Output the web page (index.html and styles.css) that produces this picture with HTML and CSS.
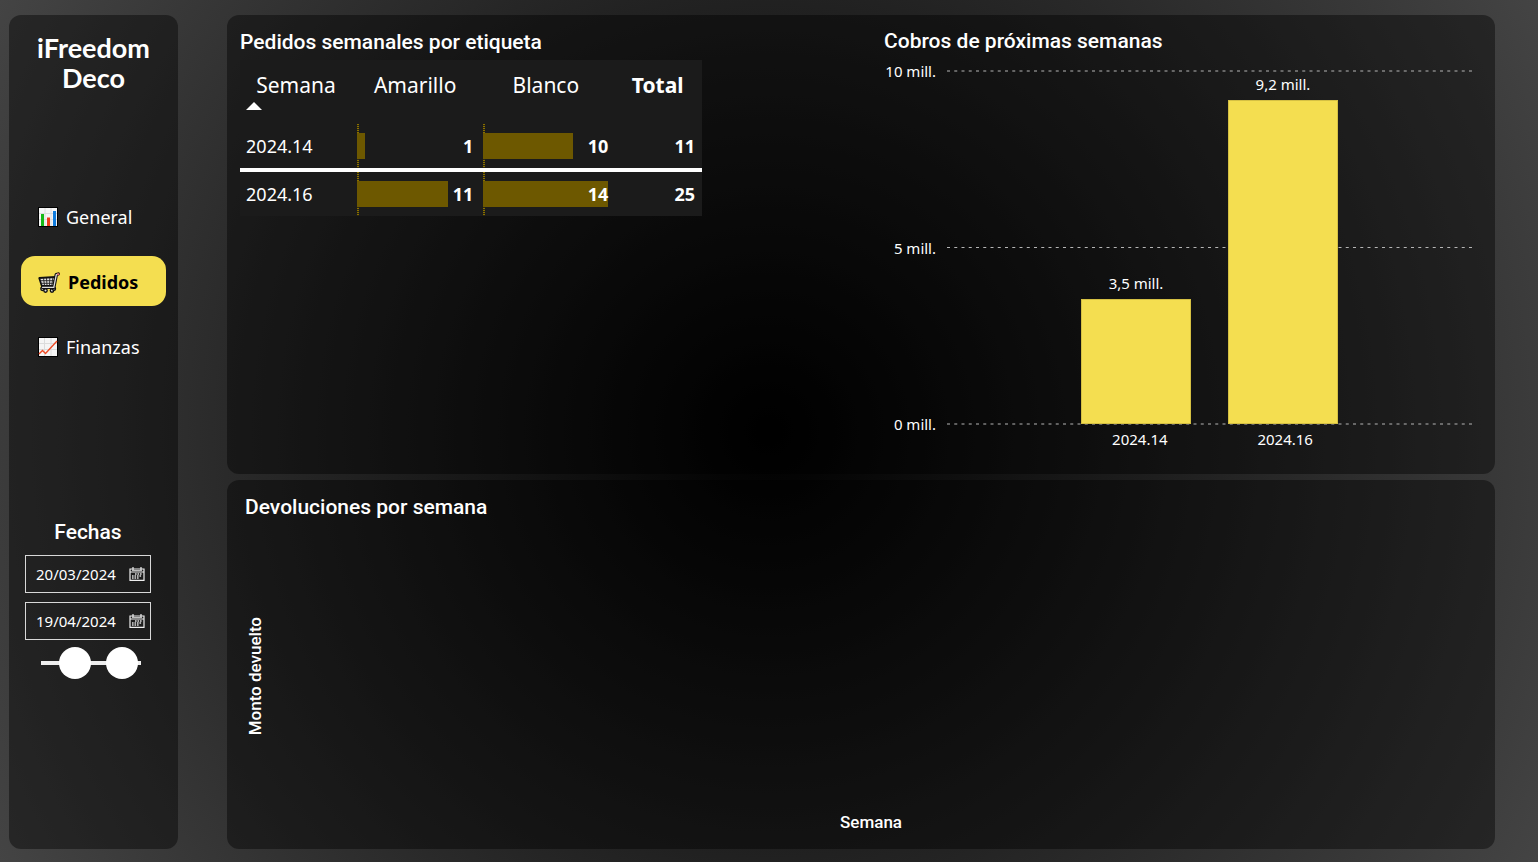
FILE: index.html
```html
<!DOCTYPE html>
<html lang="es">
<head>
<meta charset="utf-8">
<meta name="viewport" content="width=device-width, initial-scale=1">
<title>iFreedom Deco</title>
<link rel="stylesheet" href="styles.css">
</head>
<body>
<div class="dashboard">
  <aside class="panel sidebar">
    <h1 class="brand">iFreedom<br>Deco</h1>
    <nav class="nav">
      <a class="nav-item" href="#general">
        <svg class="nav-icon" viewBox="0 0 20 20" aria-hidden="true">
          <rect x=".5" y=".5" width="19" height="19" fill="#f5f5f5" stroke="#000"/>
          <path d="M1 6.5h18M1 12.5h18M7 1v18M13 1v18" stroke="#dcdcdc" fill="none"/>
          <path d="M4.500 19V7" stroke="#16b916" stroke-width="3"/>
          <path d="M10.500 19V10.500" stroke="#f03a17" stroke-width="3"/>
          <path d="M16.500 19V4" stroke="#0f7bdc" stroke-width="3"/>
        </svg>
        <span>General</span>
      </a>
      <a class="nav-item active" href="#pedidos" aria-current="page">
        <svg class="nav-icon cart" viewBox="0 0 22 21" aria-hidden="true">
          <path d="M1.200 6L17.500 5L15.500 14H3.800Z" fill="#e2e2e2" stroke="#111" stroke-width="1.800" stroke-linejoin="round"/>
          <path d="M2.500 8.700H16M3.500 11.300H15.500M5.500 6L6.500 13.500M8.500 6L9 13.500M11.800 6L11.500 13.500M14.800 6L13.800 13.500" stroke="#222" stroke-width=".9" fill="none"/>
          <g fill="#ddd" stroke="#111" stroke-width="1.400"><circle cx="4.500" cy="16.800" r="1.700"/><circle cx="7.500" cy="18.600" r="1.700"/><circle cx="14" cy="18.600" r="1.700"/><circle cx="16" cy="16.800" r="1.500"/></g>
          <path d="M20.300 2L18.300 2.700L15.800 15.300H4.500" stroke="#111" stroke-width="3.400" fill="none" stroke-linecap="round" stroke-linejoin="round"/>
          <path d="M20 2.200L18.300 2.800L15.800 15.300H4.500" stroke="#ddd" stroke-width="1.300" fill="none" stroke-linecap="round"/>
          <path d="M20 2.200h.5" stroke="#e26a62" stroke-width="2" stroke-linecap="round"/>
        </svg>
        <span>Pedidos</span>
      </a>
      <a class="nav-item" href="#finanzas">
        <svg class="nav-icon" viewBox="0 0 20 20" aria-hidden="true">
          <rect x=".5" y=".5" width="19" height="19" fill="#f5f5f5" stroke="#000"/>
          <path d="M1 6.500h18M1 12.500h18M6.500 1v18M13 1v18" stroke="#dcdcdc" fill="none"/>
          <path d="M1 17L4.500 13.500L7.500 16.500L19 4" stroke="#f04a24" stroke-width="1.400" fill="none"/>
        </svg>
        <span>Finanzas</span>
      </a>
    </nav>
    <section class="dates" aria-labelledby="dates-title">
      <h2 class="heading" id="dates-title">Fechas</h2>
      <div class="date-box">
        <input class="date-input" type="text" aria-label="Fecha de inicio" value="20/03/2024">
        <button class="date-button" type="button" aria-label="Abrir calendario de inicio">
          <svg viewBox="0 0 16 14" aria-hidden="true"><path d="M1 2H15V13.300H1ZM1 5H15M4 0V3M12 0V3" fill="none" stroke="#eee" stroke-width="1.200"/><path d="M3 3.500H13" stroke="#bbb"/><path d="M6 7H13M3 9H13M3 11H10" stroke="#ddd" stroke-width="1.400" stroke-dasharray="1.600 .9"/></svg>
        </button>
      </div>
      <div class="date-box">
        <input class="date-input" type="text" aria-label="Fecha de fin" value="19/04/2024">
        <button class="date-button" type="button" aria-label="Abrir calendario de fin">
          <svg viewBox="0 0 16 14" aria-hidden="true"><path d="M1 2H15V13.300H1ZM1 5H15M4 0V3M12 0V3" fill="none" stroke="#eee" stroke-width="1.200"/><path d="M3 3.500H13" stroke="#bbb"/><path d="M6 7H13M3 9H13M3 11H10" stroke="#ddd" stroke-width="1.400" stroke-dasharray="1.600 .9"/></svg>
        </button>
      </div>
      <div class="range">
        <input type="range" min="0" max="100" value="34" aria-label="Inicio del periodo">
        <input type="range" min="0" max="100" value="81" aria-label="Fin del periodo">
      </div>
    </section>
  </aside>

  <main class="content">
    <div class="panel overview">
      <section class="orders">
        <h2 class="heading">Pedidos semanales por etiqueta</h2>
        <table class="matrix">
          <colgroup><col class="col-week"><col class="col-yellow"><col class="col-white"><col class="col-total"></colgroup>
          <thead>
            <tr>
              <th scope="col" aria-sort="ascending">Semana<svg class="sort" viewBox="0 0 16 8" aria-hidden="true"><path d="M0 8L8 0L16 8Z" fill="#fff"/></svg></th>
              <th scope="col">Amarillo</th>
              <th scope="col">Blanco</th>
              <th scope="col" class="strong">Total</th>
            </tr>
          </thead>
          <tbody>
            <tr>
              <th scope="row">2024.14</th>
              <td class="bar-cell"><div class="meter"><div class="fill" style="width:7.14%"></div><span>1</span></div></td>
              <td class="bar-cell"><div class="meter"><div class="fill" style="width:71.43%"></div><span>10</span></div></td>
              <td>11</td>
            </tr>
            <tr>
              <th scope="row">2024.16</th>
              <td class="bar-cell"><div class="meter"><div class="fill" style="width:78.57%"></div><span>11</span></div></td>
              <td class="bar-cell"><div class="meter"><div class="fill" style="width:100%"></div><span>14</span></div></td>
              <td>25</td>
            </tr>
          </tbody>
        </table>
      </section>

      <section class="payments">
        <h2 class="heading">Cobros de próximas semanas</h2>
        <div class="chart">
          <div class="y-axis"><span>10 mill.</span><span>5 mill.</span><span>0 mill.</span></div>
          <svg class="grid-lines" aria-hidden="true">
            <g stroke="#b5b5b5" stroke-width="1" stroke-dasharray="3 4.25">
              <line x1="0" x2="100%" y1="0" y2="0"/><line x1="0" x2="100%" y1="50%" y2="50%"/><line x1="0" x2="100%" y1="100%" y2="100%"/>
            </g>
          </svg>
          <div class="columns">
            <div class="column"><span>3,5 mill.</span><div class="column-bar" style="height:35.3%"></div></div>
            <div class="column"><span>9,2 mill.</span><div class="column-bar" style="height:91.8%"></div></div>
          </div>
          <div class="x-axis"><span>2024.14</span><span>2024.16</span></div>
        </div>
      </section>
    </div>

    <section class="panel returns">
      <h2 class="heading">Devoluciones por semana</h2>
      <div class="empty-chart">
        <span class="y-title">Monto devuelto</span>
        <span class="x-title">Semana</span>
      </div>
    </section>
  </main>
</div>
</body>
</html>
```
FILE: styles.css
```css
* { box-sizing: border-box; }

body {
  margin: 0;
  color: #fff;
  font-family: "Noto Sans", "Open Sans", sans-serif;
  font-size: 15px;
  background: radial-gradient(circle farthest-corner, #000, #444) #222;
}

.dashboard {
  display: grid;
  grid-template-columns: 11fr 82.5fr;
  gap: 49px;
  min-height: 100vh;
  padding: 15px 43px 13px 9px;
}

.panel {
  background: rgba(0, 0, 0, .42);
  border-radius: 12px;
}

.heading {
  margin: 0;
  font: 500 21px/28px Roboto, sans-serif;
}

/* Sidebar */
.sidebar { padding: 18px 12px; }

.brand {
  margin: 0;
  font: 700 27px/30px Lato, sans-serif;
  text-align: center;
}

.nav {
  display: grid;
  gap: 15px;
  margin-top: 98px;
}

.nav-item {
  display: flex;
  align-items: center;
  gap: 8px;
  height: 50px;
  padding: 2px 0 0 17px;
  border-radius: 14px;
  color: #fff;
  font-size: 18px;
  text-decoration: none;
}

.nav-item.active {
  background: #f4de50;
  color: #000;
  font-weight: 700;
}

.nav-icon { width: 20px; height: 20px; }
.nav-icon.cart { width: 22px; height: 21px; }

.dates {
  display: grid;
  grid-template-columns: 100%;
  gap: 9px;
  width: 126px;
  margin: 147px 0 0 4px;
}

.dates .heading { text-align: center; }

.date-box {
  display: flex;
  align-items: center;
  height: 38px;
  padding: 0 5px 0 10px;
  border: 1px solid #d8d8d8;
}

.date-input {
  flex: 1;
  min-width: 0;
  padding: 0;
  border: 0;
  background: none;
  color: #fff;
  font: 15px "Noto Sans", sans-serif;
}

.date-button {
  display: flex;
  padding: 0;
  border: 0;
  background: none;
}

.date-button svg { width: 16px; height: 14px; }

.range {
  display: grid;
  width: 132px;
  margin-top: -2px;
  background: linear-gradient(#eee, #eee) center / 100px 4px no-repeat;
}

.range input {
  grid-area: 1 / 1;
  width: 100%;
  height: 32px;
  margin: 0;
  appearance: none;
  background: none;
  pointer-events: none;
}

.range input::-webkit-slider-thumb {
  width: 32px;
  height: 32px;
  appearance: none;
  border-radius: 50%;
  background: #fff;
  pointer-events: auto;
}

/* Panels */
.content {
  display: grid;
  grid-template-rows: 459fr 369fr;
  gap: 6px;
}

.overview {
  display: grid;
  grid-template-columns: 462fr 588fr;
  gap: 182px;
  padding: 12px 23px 22px 13px;
}

/* Orders table */
.orders { padding-top: 1px; }

.matrix {
  width: 100%;
  margin-top: 4px;
  border-collapse: collapse;
  table-layout: fixed;
  background: #1b1b1b;
  font-size: 18px;
}

.col-week { width: 24.2%; }
.col-yellow { width: 27.4%; }
.col-white { width: 29.2%; }
.col-total { width: 19.2%; }

.matrix th { font-weight: 400; }

.matrix thead th {
  height: 64px;
  padding: 10px 0 0;
  font-size: 21px;
  line-height: 30px;
  vertical-align: top;
}

.matrix thead .strong { font-weight: 700; }

.sort {
  display: block;
  width: 16px;
  height: 8px;
  margin: 2px 0 0 6px;
}

.matrix tbody th,
.matrix tbody td {
  height: 46px;
  padding: 0 7px;
  font-weight: 700;
  line-height: 26px;
  text-align: right;
}

.matrix tbody th {
  padding: 0 6px;
  font-weight: 400;
  text-align: left;
}

.matrix tbody .bar-cell {
  padding: 0 5px;
  background: repeating-linear-gradient(#8a7000 0 1px, #2b2710 1px 2px) 5px 0 / 2px 100% no-repeat;
}

.matrix tbody tr + tr > * { border-top: 4px solid #fff; }

.meter {
  display: grid;
  grid-template-columns: 100%;
}

.meter > * { grid-area: 1 / 1; }

.fill {
  height: 26px;
  background: #6d5800;
}

/* Payments chart */
.payments {
  display: flex;
  flex-direction: column;
}

.chart {
  flex: 1;
  display: grid;
  grid-template-columns: 52px 1fr;
  grid-template-rows: 1fr 28px;
  column-gap: 11px;
  padding-top: 16px;
  line-height: 20px;
}

.y-axis {
  display: flex;
  flex-direction: column;
  justify-content: space-between;
  margin: -10px 0;
  text-align: right;
}

.grid-lines {
  grid-area: 1 / 2;
  width: 100%;
  height: 100%;
  overflow: visible;
}

.columns {
  grid-area: 1 / 2;
  display: flex;
  justify-content: center;
  gap: 7%;
}

.column {
  display: flex;
  flex-direction: column;
  justify-content: flex-end;
  width: 21%;
  text-align: center;
}

.column span { margin-bottom: 6px; }

.column-bar {
  background: #f4de50;
  border: 1px solid #d5c043;
}

.x-axis {
  grid-area: 2 / 2;
  display: flex;
  justify-content: center;
  gap: 7%;
  padding: 5px 0 0 6px;
}

.x-axis span {
  width: 21%;
  text-align: center;
}

/* Returns chart */
.returns {
  display: flex;
  flex-direction: column;
  padding: 13px 18px 17px;
}

.empty-chart {
  flex: 1;
  display: grid;
  grid-template-columns: 20px 1fr;
  grid-template-rows: 1fr 20px;
  font: 500 17px/20px Roboto, sans-serif;
}

.y-title {
  grid-area: 1 / 1 / 3 / 2;
  align-self: center;
  writing-mode: vertical-rl;
  transform: rotate(180deg);
}

.x-title {
  grid-area: 2 / 2;
  text-align: center;
}
```
